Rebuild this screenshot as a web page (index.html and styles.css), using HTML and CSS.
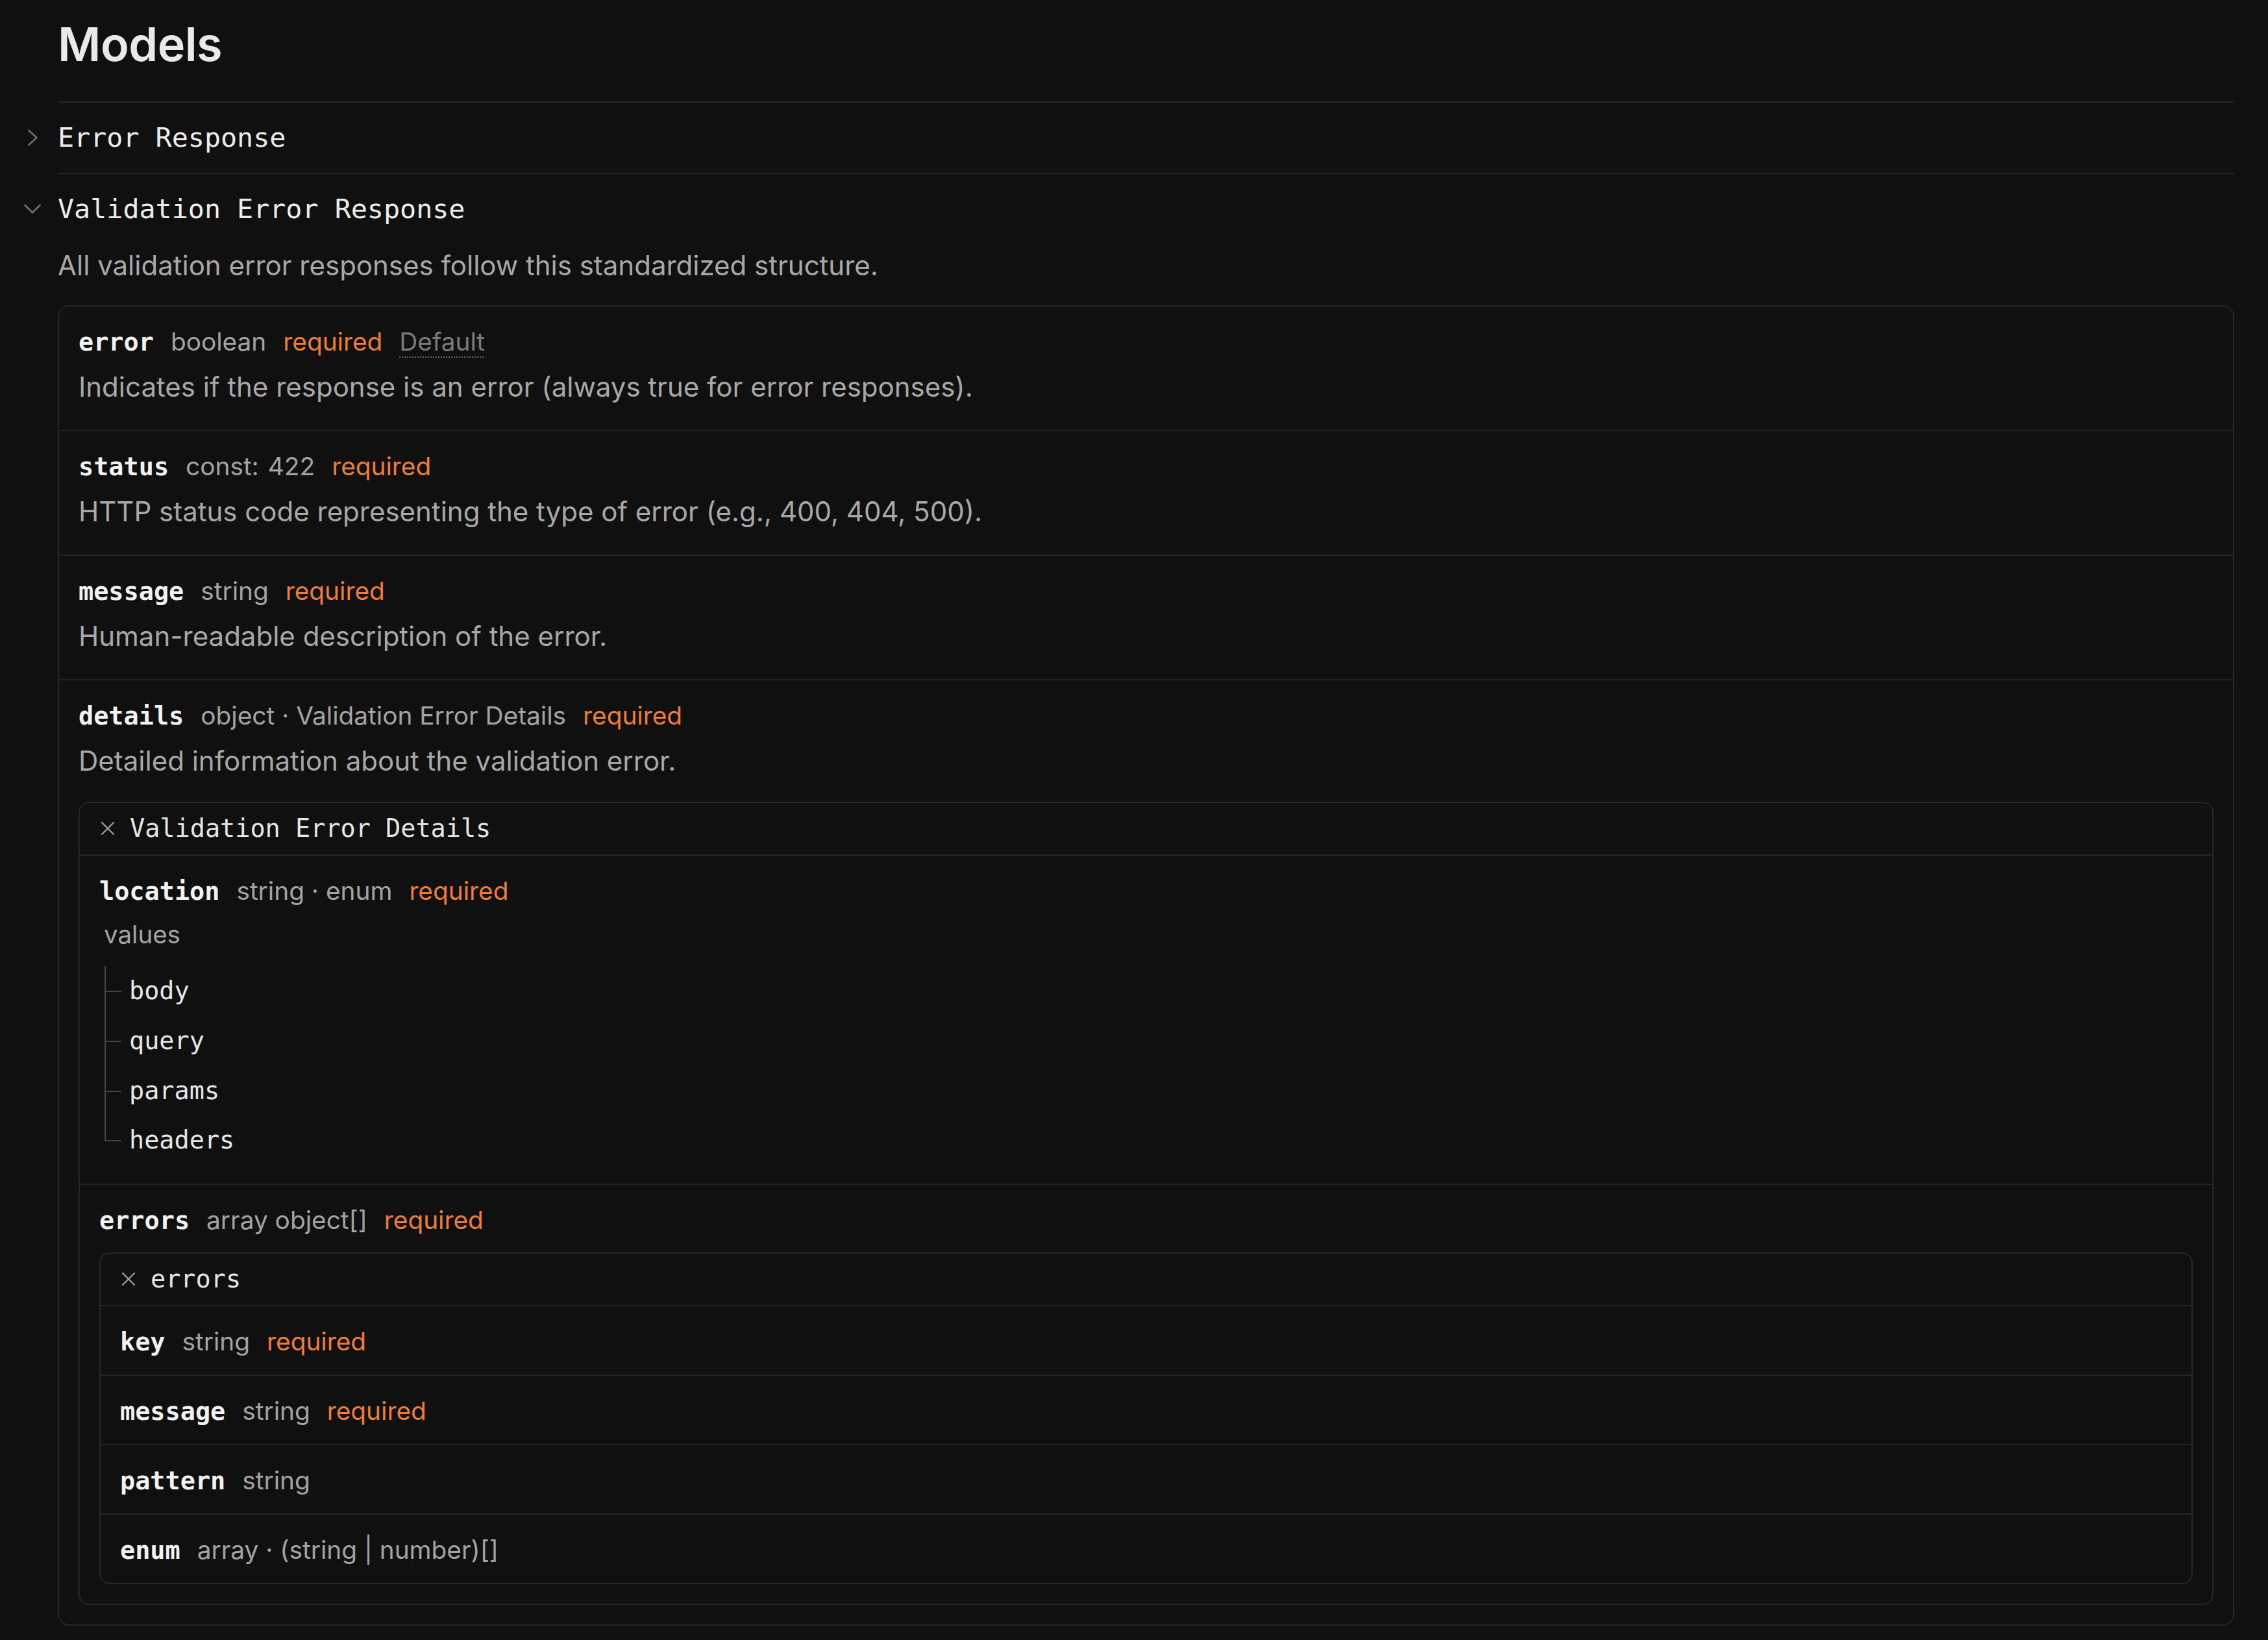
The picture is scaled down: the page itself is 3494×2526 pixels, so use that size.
FILE: index.html
```html
<!DOCTYPE html>
<html lang="en">
<head>
<meta charset="utf-8">
<title>Models</title>
<link rel="stylesheet" href="styles.css">
</head>
<body>
<main class="page">
  <h1 class="title">Models</h1>

  <section class="model">
    <div class="model-head">
      <svg class="chev" width="26" height="26" viewBox="0 0 26 26"><polyline points="7.5,2 19.5,13 7.5,24" fill="none" stroke="#6e6e6e" stroke-width="2.6" stroke-linecap="round" stroke-linejoin="round"/></svg>
      <span class="model-name">Error Response</span>
    </div>
  </section>

  <section class="model open">
    <div class="model-head">
      <svg class="chev" width="26" height="26" viewBox="0 0 26 26"><polyline points="1.5,7 13,18.5 24.5,7" fill="none" stroke="#6e6e6e" stroke-width="2.6" stroke-linecap="round" stroke-linejoin="round"/></svg>
      <span class="model-name">Validation Error Response</span>
    </div>
    <p class="model-desc">All validation error responses follow this standardized structure.</p>

    <div class="card">
      <div class="field">
        <div class="field-head"><code class="fname">error</code><span class="ftype">boolean</span><span class="req">required</span><span class="default">Default</span></div>
        <p class="fdesc">Indicates if the response is an error (always true for error responses).</p>
      </div>
      <div class="field">
        <div class="field-head"><code class="fname">status</code><span class="ftype">const:<span class="const">422</span></span><span class="req">required</span></div>
        <p class="fdesc">HTTP status code representing the type of error (e.g., 400, 404, 500).</p>
      </div>
      <div class="field">
        <div class="field-head"><code class="fname">message</code><span class="ftype">string</span><span class="req">required</span></div>
        <p class="fdesc">Human-readable description of the error.</p>
      </div>
      <div class="field has-box">
        <div class="field-head"><code class="fname">details</code><span class="ftype">object · Validation Error Details</span><span class="req">required</span></div>
        <p class="fdesc">Detailed information about the validation error.</p>

        <div class="box">
          <div class="box-head">
            <svg class="x" width="22" height="22" viewBox="0 0 22 22"><path d="M2 2 L20 20 M20 2 L2 20" stroke="#9a9a9a" stroke-width="2.4" stroke-linecap="round"/></svg>
            <span class="box-title">Validation Error Details</span>
          </div>
          <div class="field">
            <div class="field-head"><code class="fname">location</code><span class="ftype">string · enum</span><span class="req">required</span></div>
            <div class="values">values</div>
            <ul class="tree">
              <li>body</li>
              <li>query</li>
              <li>params</li>
              <li>headers</li>
            </ul>
          </div>
          <div class="field has-box">
            <div class="field-head"><code class="fname">errors</code><span class="ftype">array object[]</span><span class="req">required</span></div>
            <div class="box box-tight">
              <div class="box-head">
                <svg class="x" width="22" height="22" viewBox="0 0 22 22"><path d="M2 2 L20 20 M20 2 L2 20" stroke="#9a9a9a" stroke-width="2.4" stroke-linecap="round"/></svg>
                <span class="box-title">errors</span>
              </div>
              <div class="field">
                <div class="field-head"><code class="fname">key</code><span class="ftype">string</span><span class="req">required</span></div>
              </div>
              <div class="field">
                <div class="field-head"><code class="fname">message</code><span class="ftype">string</span><span class="req">required</span></div>
              </div>
              <div class="field">
                <div class="field-head"><code class="fname">pattern</code><span class="ftype">string</span></div>
              </div>
              <div class="field">
                <div class="field-head"><code class="fname">enum</code><span class="ftype">array · (string | number)[]</span></div>
              </div>
            </div>
          </div>
        </div>
      </div>
    </div>
  </section>
</main>
</body>
</html>
```

FILE: styles.css
```css
* { box-sizing: border-box; }

html, body {
  margin: 0;
  padding: 0;
  background: #101010;
}

body {
  font-family: Inter, "Noto Sans", sans-serif;
  color: #a6a6a6;
  overflow: hidden;
}

.page {
  padding: 25px 52px 0 89px;
}

.title {
  margin: 0 0 45px 0;
  font-family: Inter, sans-serif;
  font-weight: 600;
  font-size: 72px;
  line-height: 86px;
  color: #e9e9e9;
  letter-spacing: -0.5px;
}

.model {
  border-top: 2px solid #252525;
}

.model-head {
  display: flex;
  align-items: center;
  padding: 27px 0;
  line-height: 54px;
}

.open .model-head {
  padding-bottom: 0;
}

.chev {
  flex: none;
  margin-left: -52px;
  margin-right: 26px;
}

.model-name {
  font-family: "DejaVu Sans Mono", "Liberation Mono", monospace;
  font-size: 41.7px;
  color: #ececec;
}

.model-desc {
  margin: 30px 0 31px 0;
  font-size: 42px;
  line-height: 60px;
  color: #a8a8a8;
}

.card {
  border: 2px solid #262626;
  border-radius: 18px;
}

.field {
  padding: 27px 30px 24px 30px;
}

.field + .field {
  border-top: 2px solid #252525;
}

.field.has-box {
  padding-bottom: 30px;
}

.field-head {
  display: flex;
  align-items: baseline;
  gap: 26px;
  height: 54px;
  line-height: 54px;
  font-size: 38.8px;
  white-space: nowrap;
}

.fname {
  font-family: "DejaVu Sans Mono", "Liberation Mono", monospace;
  font-weight: 700;
  font-size: 38.5px;
  color: #f2f2f2;
}

.ftype {
  color: #a3a3a3;
}

.const {
  margin-left: 14px;
}

.req {
  color: #ef7d36;
}

.default {
  color: #7a7a7a;
  text-decoration: underline dotted #6a6a6a;
  text-underline-offset: 9px;
  text-decoration-thickness: 2px;
}

.fdesc {
  margin: 11px 0 10px 0;
  font-size: 42px;
  line-height: 64px;
  color: #a8a8a8;
}

.box {
  margin-top: 31px;
  border: 2px solid #262626;
  border-radius: 16px;
}

.box-tight {
  margin-top: 23px;
}

.box-head {
  display: flex;
  align-items: center;
  gap: 23px;
  padding: 12px 30px 13px 32px;
  line-height: 54px;
  border-bottom: 2px solid #252525;
}

.box-head + .field {
  border-top: none;
}

.x {
  flex: none;
}

.box-title {
  font-family: "DejaVu Sans Mono", "Liberation Mono", monospace;
  font-size: 38.5px;
  color: #e6e6e6;
}

.values {
  margin: 13px 0 0 7px;
  font-size: 38.5px;
  line-height: 54px;
  color: #a3a3a3;
}

.tree {
  list-style: none;
  margin: 22px 0 4px 8px;
  padding: 0;
}

.tree li {
  position: relative;
  padding: 11.35px 0 11.35px 38px;
  line-height: 54px;
  font-family: "DejaVu Sans Mono", "Liberation Mono", monospace;
  font-size: 38.5px;
  color: #e6e6e6;
}

.tree li::before {
  content: "";
  position: absolute;
  left: 0;
  top: 0;
  bottom: 0;
  width: 2px;
  background: #444;
}

.tree li:last-child::before {
  bottom: 50%;
}

.tree li::after {
  content: "";
  position: absolute;
  left: 0;
  top: 50%;
  width: 26px;
  height: 2px;
  background: #444;
}
```
